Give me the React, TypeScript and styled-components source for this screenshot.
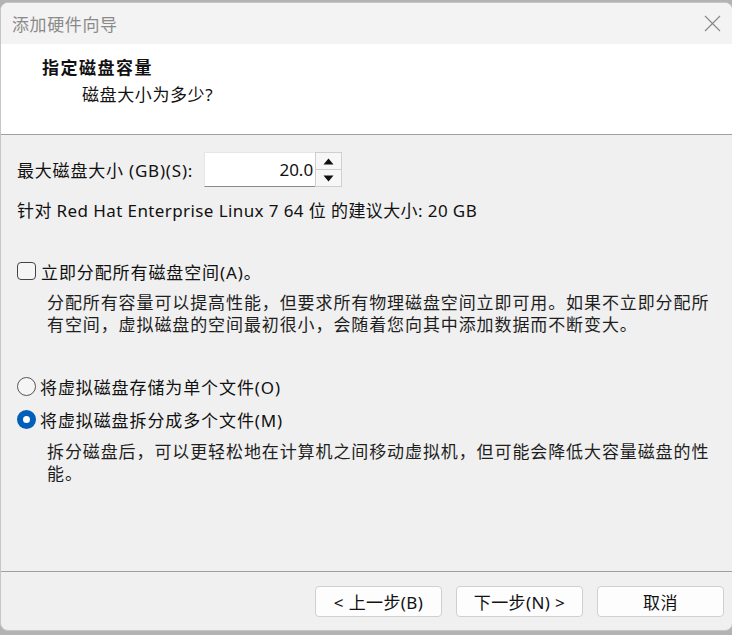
import React from "react";
import styled, { createGlobalStyle } from "styled-components";

const Global = createGlobalStyle`
  html, body { margin: 0; padding: 0; background: #b3b3b3; }
  body {
    font-family: "Noto Sans", "Noto Sans CJK SC", sans-serif;
    font-size: 17px;
    color: #111;
    overflow: hidden;
  }
  * { box-sizing: border-box; }
`;

const Window = styled.div`
  margin-top: 2px;
  width: 733px;
  height: 629px;
  background: #f0f0f0;
  border: 1px solid #c6c6c6;
  border-radius: 8px;
  overflow: hidden;
  display: flex;
  flex-direction: column;
`;

const TitleBar = styled.div`
  height: 41px;
  flex: none;
  background: #f3f3f3;
  display: flex;
  align-items: center;
  justify-content: space-between;
  padding: 0 10px 0 11px;
`;

const TitleText = styled.span`
  color: #8a8a8a;
  font-size: 17px;
  letter-spacing: 0.6px;
`;

const CloseBtn = styled.svg`
  width: 17px;
  height: 17px;
  margin-right: 1px;
`;

const Header = styled.div`
  height: 91px;
  flex: none;
  background: #fff;
  border-bottom: 1px solid #a0a0a0;
  padding: 13px 0 0 41px;
`;

const HeaderTitle = styled.div`
  font-weight: 700;
  line-height: 22px;
  letter-spacing: 1.5px;
`;

const HeaderSub = styled.div`
  line-height: 22px;
  margin-top: 5px;
  padding-left: 40px;
  letter-spacing: 0.6px;
`;

const Content = styled.div`
  flex: 1;
  padding: 17px 16px 0 16px;
  display: flex;
  flex-direction: column;
`;

const SizeRow = styled.div`
  display: flex;
  align-items: center;
  height: 35px;
`;

const Label = styled.span`
  letter-spacing: 0.8px;
  margin-right: 11px;
`;

const SpinBox = styled.div`
  display: flex;
  height: 35px;
`;

const NumberField = styled.div`
  width: 111px;
  background: #fff;
  border-top: 1px solid #e6e6e6;
  border-left: 1px solid #e6e6e6;
  border-bottom: 1px solid #8a8a8a;
  display: flex;
  align-items: center;
  justify-content: flex-end;
  padding-right: 2px;
  font-size: 17px;
`;

const Spinner = styled.div`
  width: 27px;
  display: flex;
  flex-direction: column;
`;

const SpinButton = styled.div<{ $down?: boolean }>`
  flex: 1;
  background: #f7f7f7;
  border: 1px solid #cfcfcf;
  border-top: ${(p) => (p.$down ? "none" : "1px solid #cfcfcf")};
  display: flex;
  align-items: center;
  justify-content: center;
`;

const Line = styled.div<{ $mt?: number }>`
  line-height: 22px;
  margin-top: ${(p) => p.$mt ?? 0}px;
  white-space: nowrap;
  letter-spacing: 0.4px;
`;

const Desc = styled.div<{ $mt: number }>`
  margin-top: ${(p) => p.$mt}px;
  padding-left: 30px;
  line-height: 22px;
  color: #1e1e1e;
  letter-spacing: 0.9px;
  white-space: nowrap;
`;

const OptionRow = styled.label<{ $mt: number }>`
  display: flex;
  align-items: center;
  height: 22px;
  margin-top: ${(p) => p.$mt}px;
  letter-spacing: 0.9px;
  white-space: nowrap;
`;

const CheckBox = styled.span`
  width: 19px;
  height: 18px;
  border: 1px solid #444;
  border-radius: 4px;
  background: #f5f5f5;
  margin-right: 5px;
  flex: none;
`;

const Radio = styled.span<{ $checked?: boolean }>`
  width: 19px;
  height: 19px;
  border-radius: 50%;
  flex: none;
  margin-right: 4px;
  border: ${(p) => (p.$checked ? "6px solid #005fb8" : "1px solid #555")};
  background: ${(p) => (p.$checked ? "#fff" : "#f5f5f5")};
`;

const Footer = styled.div`
  height: 59px;
  flex: none;
  border-top: 1px solid #a0a0a0;
  display: flex;
  justify-content: flex-end;
  gap: 14px;
  padding: 14px 8px 0 0;
`;

const Button = styled.button`
  width: 127px;
  height: 31px;
  background: #fdfdfd;
  border: 1px solid #d0d0d0;
  border-radius: 4px;
  font-family: inherit;
  font-size: 17px;
  color: #111;
  padding: 0;
  letter-spacing: 0.4px;
`;

const Up = () => (
  <svg width="11" height="7" viewBox="0 0 11 7">
    <path d="M5.5 0.5 L10.5 6.5 L0.5 6.5 Z" fill="#111" />
  </svg>
);
const Down = () => (
  <svg width="11" height="7" viewBox="0 0 11 7">
    <path d="M0.5 0.5 L10.5 0.5 L5.5 6.5 Z" fill="#111" />
  </svg>
);

export default function App() {
  return (
    <>
      <Global />
      <Window>
        <TitleBar>
          <TitleText>添加硬件向导</TitleText>
          <CloseBtn viewBox="0 0 17 17">
            <path d="M1 1 L16 16 M16 1 L1 16" stroke="#8a8a8a" strokeWidth="1.2" fill="none" />
          </CloseBtn>
        </TitleBar>
        <Header>
          <HeaderTitle>指定磁盘容量</HeaderTitle>
          <HeaderSub>磁盘大小为多少?</HeaderSub>
        </Header>
        <Content>
          <SizeRow>
            <Label>最大磁盘大小 (GB)(S):</Label>
            <SpinBox>
              <NumberField>20.0</NumberField>
              <Spinner>
                <SpinButton><Up /></SpinButton>
                <SpinButton $down><Down /></SpinButton>
              </Spinner>
            </SpinBox>
          </SizeRow>
          <Line $mt={13}>针对 Red Hat Enterprise Linux 7 64 位 的建议大小: 20 GB</Line>
          <OptionRow $mt={38}>
            <CheckBox />
            立即分配所有磁盘空间(A)。
          </OptionRow>
          <Desc $mt={10}>
            分配所有容量可以提高性能，但要求所有物理磁盘空间立即可用。如果不立即分配所
            <br />
            有空间，虚拟磁盘的空间最初很小，会随着您向其中添加数据而不断变大。
          </Desc>
          <OptionRow $mt={39}>
            <Radio />
            将虚拟磁盘存储为单个文件(O)
          </OptionRow>
          <OptionRow $mt={11}>
            <Radio $checked />
            将虚拟磁盘拆分成多个文件(M)
          </OptionRow>
          <Desc $mt={11}>
            拆分磁盘后，可以更轻松地在计算机之间移动虚拟机，但可能会降低大容量磁盘的性
            <br />
            能。
          </Desc>
        </Content>
        <Footer>
          <Button>&lt; 上一步(B)</Button>
          <Button>下一步(N) &gt;</Button>
          <Button>取消</Button>
        </Footer>
      </Window>
    </>
  );
}
